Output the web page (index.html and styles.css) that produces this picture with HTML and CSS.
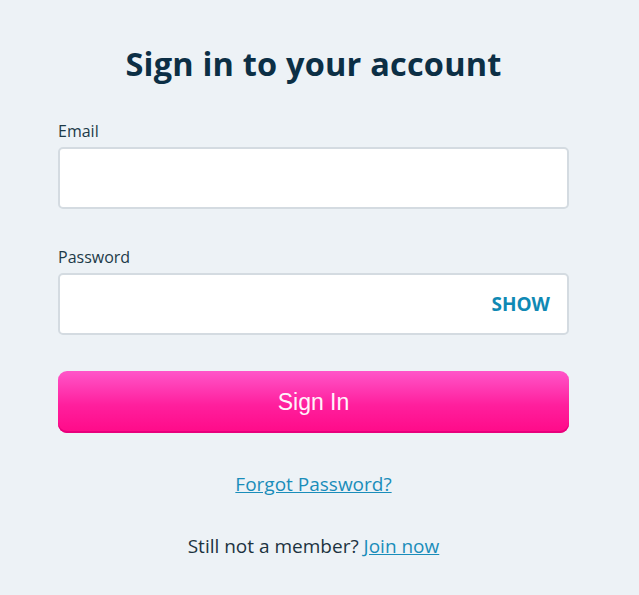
FILE: index.html
```html
<!DOCTYPE html>
<html>
<head>
	<title>Sign in</title>
	<meta charset="utf-8">
	<meta name="viewport" content="width=device-width, initial-scale=1">
	<link rel="stylesheet" href="styles.css">
</head>
<body>

	<div class="signin">
		<h1>Sign in to your account</h1>

		<form class="signin-form">
			<label class="field">
				<span class="field-label">Email</span>
				<input class="field-input" type="email">
			</label>

			<label class="field">
				<span class="field-label">Password</span>
				<span class="field-wrap">
					<input class="field-input" type="password">
					<button class="btn-show" type="button">SHOW</button>
				</span>
			</label>

			<button class="btn-signin" type="submit">Sign In</button>
		</form>

		<p class="forgot"><a href="#">Forgot Password?</a></p>
		<p class="join">Still not a member? <a href="#">Join now</a></p>
	</div>

</body>
</html>
```

FILE: styles.css
```css
*,
*:before,
*:after {
	box-sizing: border-box;
}

body {
	margin: 0;
	background-color: #edf2f6;
	font-family: "Open Sans", "Noto Sans", sans-serif;
	color: #1c3340;
}

.signin {
	margin-left: 58px;
	width: 511px;
	padding-top: 40px;
}

h1 {
	margin: 0 0 33px;
	font-size: 32.5px;
	font-weight: 700;
	line-height: 48px;
	color: #0c2f45;
	text-align: center;
	letter-spacing: 0.2px;
}

.field {
	display: block;
	margin-bottom: 36px;
}

.field:first-child {
	margin-bottom: 38px;
}

.field-label {
	display: block;
	font-size: 16px;
	line-height: 20px;
	margin-bottom: 6px;
	color: #1c3a48;
}

.field-wrap {
	position: relative;
	display: block;
}

.field-input {
	display: block;
	width: 100%;
	height: 62px;
	border: 2px solid #d4dbe1;
	border-radius: 5px;
	background-color: #ffffff;
	font-size: 16px;
	padding: 0 16px;
}

.btn-show {
	position: absolute;
	right: 19px;
	top: 50%;
	transform: translateY(-50%);
	border: 0;
	background: none;
	padding: 0;
	font-family: "Open Sans", sans-serif;
	font-size: 19px;
	font-weight: 700;
	color: #0f89b4;
}

.btn-signin {
	display: block;
	width: 100%;
	height: 62px;
	border: 0;
	border-radius: 9px;
	background: linear-gradient(#ff56c9, #ff1f9d 55%, #ff0a88);
	box-shadow: inset 0 -2px 0 #e8007c;
	font-family: "Liberation Sans", Arial, sans-serif;
	font-size: 23px;
	color: #fff4fb;
}

.forgot,
.join {
	margin: 0;
	text-align: center;
	font-size: 19px;
	line-height: 26px;
}

.forgot {
	margin-top: 38px;
}

.join {
	margin-top: 36px;
	color: #1c3340;
}

a {
	color: #1a8dba;
}
```
